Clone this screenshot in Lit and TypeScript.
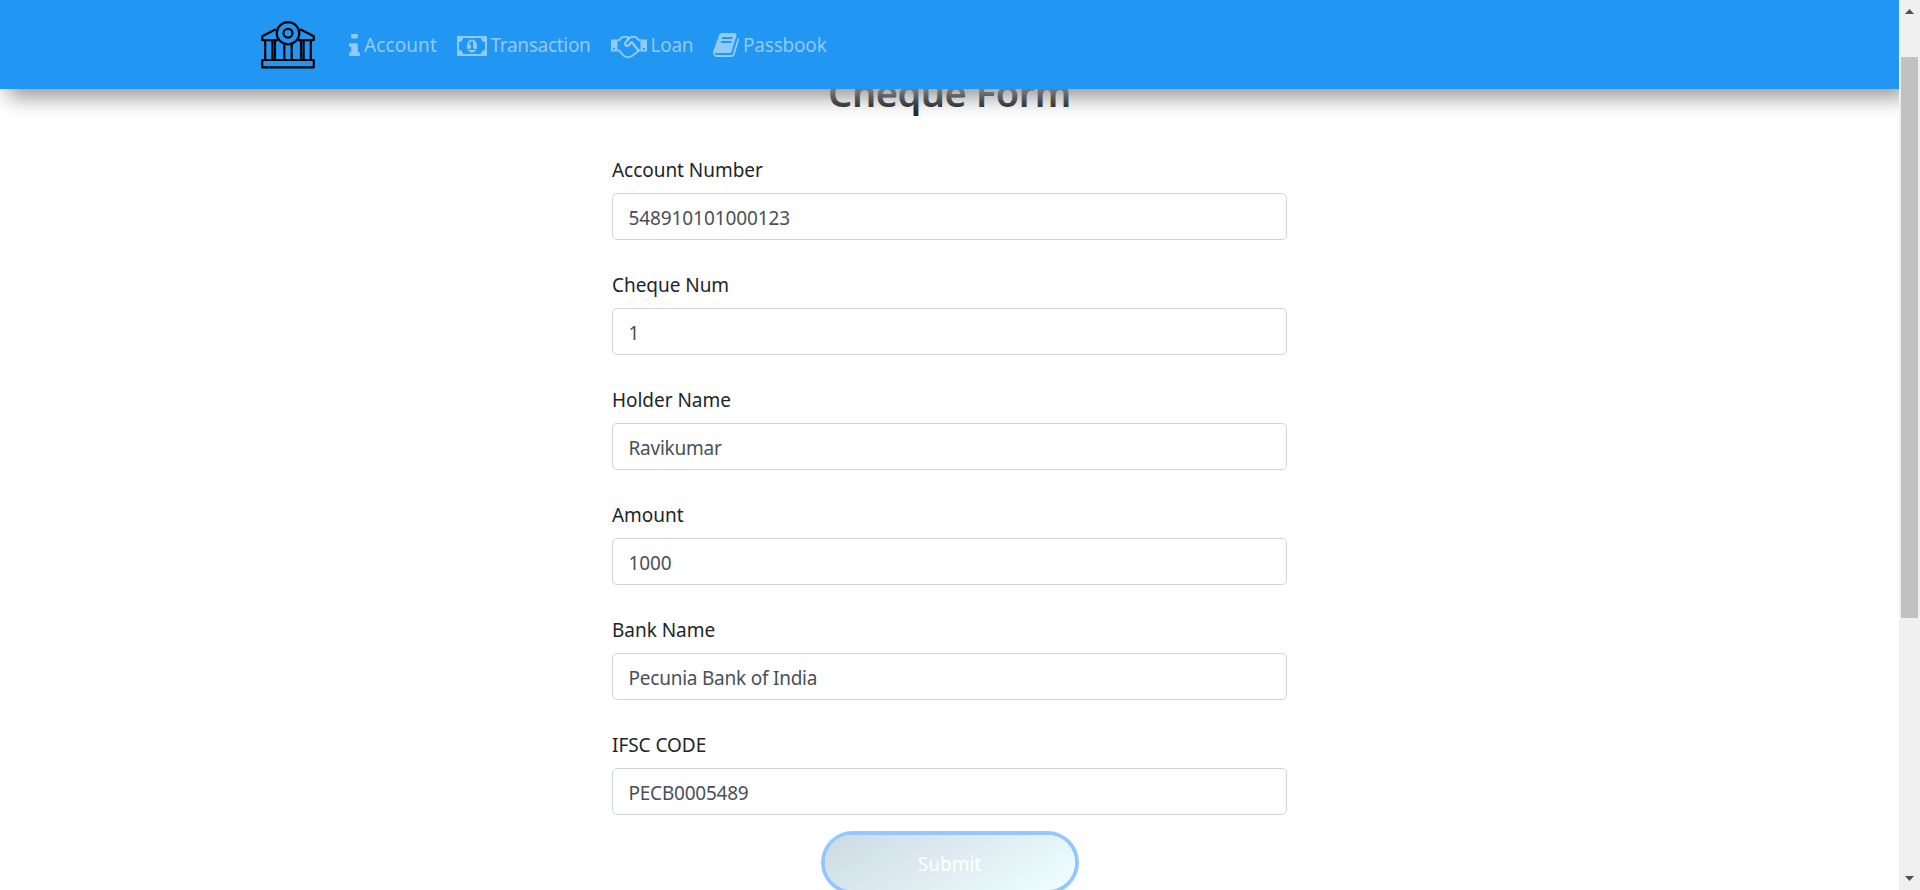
import { LitElement, html, css, svg } from "lit";
import { customElement } from "lit/decorators.js";

const icons = {
  info: svg`<svg width="11" height="22" viewBox="0 0 640 1536" preserveAspectRatio="none" fill="currentColor"><path d="M640 1344v128q0 26-19 45t-45 19H64q-26 0-45-19t-19-45v-128q0-26 19-45t45-19h64V896H64q-26 0-45-19T0 832V704q0-26 19-45t45-19h384q26 0 45 19t19 45v576h64q26 0 45 19t19 45zM512 64v192q0 26-19 45t-45 19H192q-26 0-45-19t-19-45V64q0-26 19-45t45-19h256q26 0 45 19t19 45z"/></svg>`,
  money: svg`<svg width="30" height="20" viewBox="0 0 1920 1280" fill="currentColor"><path d="M768 896h384v-96h-128V352H910L762 489l77 80q42-37 55-57h2v288H768zm512-256q0 70-21 142t-59.500 134-101.500 101-138 39-138-39-101.500-101T661 782t-21-142 21-142 59.500-134T822 263t138-39 138 39 101.500 101 59.500 134 21 142zm512 256V384q-106 0-181-75t-75-181H384q0 106-75 181t-181 75v512q106 0 181 75t75 181h1152q0-106 75-181t181-75zm128-832v1152q0 26-19 45t-45 19H64q-26 0-45-19t-19-45V64q0-26 19-45T64 0h1792q26 0 45 19t19 45z"/></svg>`,
  hands: svg`<svg width="36" height="24" viewBox="0 0 36 24" fill="none" stroke="currentColor" stroke-width="1.9" stroke-linejoin="round" stroke-linecap="butt"><path fill="currentColor" fill-rule="evenodd" stroke="none" d="M0 4.500h6.500v12H0zM2 13v1.800h1.800V13zM29.500 4.500H36v12h-6.500zM32.200 13v1.800H34V13z"/><path d="M6.500 5.300h1.500l3.500-3.400h4.500l2 1.100 2.300-1.100h4.200l3.500 3.400h1.500M6.500 15.500h1.500l4.500 4.900q4 3.300 8.500.6l7-5.500h1.500"/><path stroke-width="2.300" d="M18.200 3l-3.900 4.700q-.7 1.500.4 2.600 2 1.600 4.300-1.300l1.700-1.900 6.800 8.400"/></svg>`,
  book: svg`<svg width="26" height="24" viewBox="0 0 1664 1536" preserveAspectRatio="none" fill="currentColor"><path d="M1639 350q40 57 18 129l-275 906q-19 64-76.500 107.500T1183 1536H260q-77 0-148.500-53.500T12 1351q-24-67-2-127 0-4 3-27t4-37q1-8-3-21.500t-3-19.500q2-11 8-21t16.500-23.500T52 1051q23-38 45-91.500t30-91.500q3-10 .5-30t-.5-28q3-11 17-28t17-23q21-36 42-92t25-90q1-9-2.500-32t.5-28q4-13 22-30.500t22-22.500q19-26 42.500-84.500T340 283q1-8-3-25.500t-2-26.500q2-8 9-18t18-23 17-21q8-12 16.500-30.500t15-35 16-36 19.500-32T469.500 12t36-11.500T553 6l-1 3q38-9 51-9h761q74 0 114 56t18 130l-274 906q-36 119-71.500 153.500T1022 1280H153q-27 0-38 15-11 16-1 43 24 70 144 70h923q29 0 56-15.500t35-41.500l300-987q7-22 5-57 38 15 59 43zm-1064 2q-4 13 2 22.500t20 9.500h608q13 0 25.500-9.500T1247 352l21-64q4-13-2-22.500t-20-9.500H638q-13 0-25.500 9.500T596 288zm-83 256q-4 13 2 22.500t20 9.500h608q13 0 25.500-9.500T1164 608l21-64q4-13-2-22.500t-20-9.500H555q-13 0-25.500 9.500T513 544z"/></svg>`,
};

@customElement("app-root")
export class AppRoot extends LitElement {
  static styles = css`
    :host { display: block; height: 890px; overflow: hidden; background: #fff; color: #212529;
      font: 19px/30px "Noto Sans", "Open Sans", sans-serif; }
    * { box-sizing: border-box; }
    .layout { display: grid; grid-template-columns: 1899px 21px; height: 890px; }
    .page { overflow: hidden; height: 890px; display: flex; flex-direction: column; }
    nav { height: 89px; flex: none; background: #2196f3; display: flex; align-items: center; padding-left: 261px; z-index: 1;
      position: relative; box-shadow: 8px 8px 20px #949494; }
    .logo { width: 54px; height: 48px; margin: 0 34px 0 0; display: block; }
    .link { display: flex; align-items: center; gap: 4px; color: rgba(255,255,255,.5); margin-right: 20px; white-space: nowrap; }
    .link svg { display: block; }
    .link span { padding-top: 1px; }
    .account span { width: 72.500px; letter-spacing: .1px; }
    .transaction { letter-spacing: -.3px; }
    .transaction span { width: 100px; }
    .transaction svg { margin-top: 2px; }
    .loan { letter-spacing: -.25px; gap: 4px; }
    .loan svg { margin-top: 4px; }
    .loan span { width: 42.500px; }
    .passbook { letter-spacing: -.2px; }
    .passbook svg { margin-top: 1px; }
    main { width: 675px; margin-left: 612px; }
    h1 { margin: -21px 0 0; font-size: 38px; line-height: 48px; font-weight: 600; letter-spacing: -.45px; text-align: center; }
    form { padding-top: 39px; }
    .field { height: 115px; }
    label { display: block; height: 38px; letter-spacing: -.04px; }
    input { display: block; width: 675px; height: 47px; border: 1px solid #ced4da; border-radius: 5px; padding: 3px 15.5px 0; color: #495057; font: inherit; outline: 0; background: #fff; letter-spacing: -.23px; }
    .numeric { letter-spacing: -.1px; }
    .submit { display: block; width: 250px; height: 55px; margin: -10px auto 0; padding: 3px 0 0; border: 0; border-radius: 30px; color: #fff; font: inherit;
      background: linear-gradient(150deg, #cddae4, #f0ffff); box-shadow: 0 0 0 4px #93c7ff; }
    .bar { background: #f0f0f0; display: flex; flex-direction: column; align-items: center; padding: 9px 0; height: 890px; }
    .thumb { width: 17px; height: 561px; background: #c1c1c1; margin: 43px 0 auto; }
    .bar svg { display: block; }
  `;

  private nav = [
    { id: "account", icon: icons.info, text: "Account" },
    { id: "transaction", icon: icons.money, text: "Transaction" },
    { id: "loan", icon: icons.hands, text: "Loan" },
    { id: "passbook", icon: icons.book, text: "Passbook" },
  ];

  private fields = [
    ["Account Number", "548910101000123"],
    ["Cheque Num", "1"],
    ["Holder Name", "Ravikumar"],
    ["Amount", "1000"],
    ["Bank Name", "Pecunia Bank of India"],
    ["IFSC CODE", "PECB0005489"],
  ];

  render() {
    return html`<div class="layout">
      <div class="page">
        <nav>
          <svg class="logo" viewBox="0 0 54 49" preserveAspectRatio="none" fill="none" stroke="#000" stroke-width="2.200" stroke-linejoin="round">
            <path d="M14.800 8.500L1.200 15.500v4H17M39.200 8.500L52.800 15.500v4H37M1.200 39.800h51.600v7.600H1.200zM4.200 20v19M11.400 20v19M14 20v19M23.300 23v16M30.700 23v16M40 20v19M42.600 20v19M49.800 20v19"/>
            <circle cx="27" cy="12.500" r="11.300"/><circle cx="27" cy="12.500" r="4.500"/>
          </svg>
          ${this.nav.map((n) => html`<a class="link ${n.id}">${n.icon}<span>${n.text}</span></a>`)}
        </nav>
        <main>
          <h1>Cheque Form</h1>
          <form>
            ${this.fields.map(([l, v]) => html`<div class="field"><label>${l}</label><input class=${/^\d+$/.test(v) ? "numeric" : ""} .value=${v} /></div>`)}
            <button class="submit" type="button">Submit</button>
          </form>
        </main>
      </div>
      <div class="bar">
        <svg width="9" height="5" viewBox="0 0 9 5"><path fill="#505050" d="M0 5L4.500 0 9 5z"/></svg>
        <div class="thumb"></div>
        <svg width="9" height="5" viewBox="0 0 9 5"><path fill="#505050" d="M0 0h9L4.500 5z"/></svg>
      </div>
    </div>`;
  }
}
